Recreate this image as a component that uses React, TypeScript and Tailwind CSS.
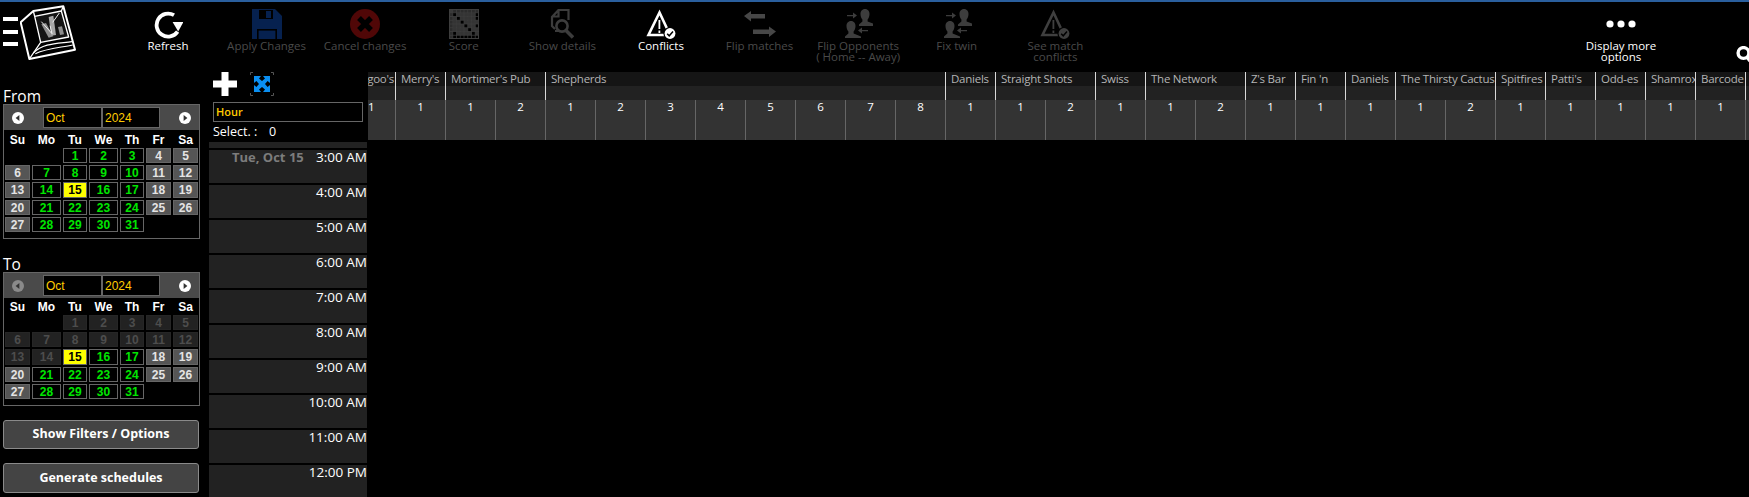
import React from "react";

const on = "text-white";
const off = "text-[#4a4a4a]";

function Refresh() {
  return (
    <svg width="30" height="30" viewBox="0 0 30 30" fill="none">
      <path d="M21 6.2 A11.5 11.5 0 1 0 24.6 22.6" stroke="#fff" strokeWidth="3.8" />
      <path d="M19.6 13 H30.4 L25.2 22.4 Z" fill="#fff" />
    </svg>
  );
}
function Floppy() {
  return (
    <svg width="30" height="30" viewBox="0 0 30 30">
      <path d="M0 0 H23 L30 7 V30 H0 Z" fill="#06214f" />
      <rect x="7" y="1" width="14" height="9" fill="#000" />
      <rect x="14" y="2" width="5" height="7" fill="#06214f" />
      <rect x="5" y="20" width="20" height="1.6" fill="#000" />
      <rect x="5" y="20" width="1.6" height="10" fill="#000" />
      <rect x="23.4" y="20" width="1.6" height="10" fill="#000" />
    </svg>
  );
}
function Cancel() {
  return (
    <svg width="30" height="30" viewBox="0 0 30 30">
      <circle cx="15" cy="15" r="15" fill="#500707" />
      <path d="M9 9 L21 21 M21 9 L9 21" stroke="#000" strokeWidth="5.4" />
    </svg>
  );
}
function Score() {
  const dark = [
    [2, 1], [3, 1], [4, 1], [5, 1], [6, 1], [1, 2], [3, 2], [4, 2], [5, 2], [6, 2], [1, 3], [2, 3], [4, 3], [5, 3], [6, 3], [7, 3],
    [1, 4], [2, 4], [3, 4], [5, 4], [6, 4], [1, 5], [2, 5], [3, 5], [4, 5], [6, 5], [7, 5], [2, 6], [3, 6], [4, 6], [5, 6], [7, 6],
  ];
  const xs = [0, 1, 2, 3, 4, 5, 6, 7, 8];
  return (
    <svg width="30" height="30" viewBox="0 0 32 32">
      <rect x="0.5" y="0.5" width="31" height="31" fill="none" stroke="#3f3f3f" />
      <rect x="0" y="0" width="32" height="4" fill="#3f3f3f" opacity="0.7" />
      <rect x="0" y="0" width="4" height="32" fill="#3f3f3f" opacity="0.7" />
      {dark.map(([x, y]) => (
        <rect key={x + "-" + y} x={x * 4} y={y * 4} width="4" height="4" fill="#343434" />
      ))}
      {xs.map((i) => (
        <path key={i} d={`M${i * 4} 0 V32 M0 ${i * 4} H32`} stroke="#3f3f3f" strokeWidth="0.8" />
      ))}
    </svg>
  );
}
function Details() {
  return (
    <svg width="24" height="30" viewBox="0 0 24 30" fill="none">
      <path d="M8.5 1 H18.5 V11 M5 20 L2 17 V8 L8.5 1 V7.5 H2" stroke="#3c3c3c" strokeWidth="2.2" />
      <circle cx="12" cy="17" r="5.6" stroke="#3c3c3c" strokeWidth="2.6" />
      <path d="M16 21.5 L23 28.5" stroke="#3c3c3c" strokeWidth="3.6" />
      <path d="M5 22 H9" stroke="#3c3c3c" strokeWidth="2" />
    </svg>
  );
}
function Warn({ color }: { color: string }) {
  return (
    <svg width="30" height="30" viewBox="0 0 30 30" fill="none">
      <path d="M13.5 3.5 L2.5 26 H24 Z" stroke={color} strokeWidth="2.6" strokeLinejoin="miter" />
      <path d="M13.4 11 V20 M13.4 21.5 V24" stroke={color} strokeWidth="1.8" />
      <circle cx="24" cy="24.5" r="6.6" fill="#000" />
      <circle cx="24" cy="24.5" r="5.4" fill={color} />
      <path d="M21.2 24.8 L23.2 26.8 L27 22.6" stroke="#000" strokeWidth="1.5" />
    </svg>
  );
}
function FlipMatches() {
  return (
    <svg width="32" height="30" viewBox="0 0 32 30" fill="#474747">
      <path d="M0 7 L7 2 V5 H21 V9.5 H7 V12.5 Z" />
      <path d="M32 22.5 L25 17.5 V20.5 H9 V25 H25 V28 Z" />
    </svg>
  );
}
function Person({ x, y }: { x: number; y: number }) {
  return (
    <path
      transform={`translate(${x} ${y})`}
      d="M5 0 C8 0 9.5 2.4 9.5 5 C9.5 7.6 8.6 9.4 7.6 10.6 V12.4 L15 15.4 V17 H-1 V15.4 L2.4 12.4 V10.6 C1.4 9.4 0.5 7.6 0.5 5 C0.5 2.4 2 0 5 0 Z"
    />
  );
}
function FlipOpp() {
  return (
    <svg width="30" height="30" viewBox="0 0 30 30" fill="#3d3d3d">
      <Person x={17} y={0} />
      <Person x={3} y={12} />
      <path d="M4 6 H10 V3.6 L14 6.6 L10 9.6 V7.2 H4 Z" />
      <path d="M25 21 H19 V18.6 L15 21.6 L19 24.6 V22.2 H25 Z" />
    </svg>
  );
}
function Dots() {
  return (
    <svg width="30" height="30" viewBox="0 0 30 30" fill="#fff">
      <circle cx="4" cy="15" r="3.6" />
      <circle cx="15" cy="15" r="3.6" />
      <circle cx="26" cy="15" r="3.6" />
    </svg>
  );
}

const tools: { label: string[]; active: boolean; icon: React.ReactNode }[] = [
  { label: ["Refresh"], active: true, icon: <Refresh /> },
  { label: ["Apply Changes"], active: false, icon: <Floppy /> },
  { label: ["Cancel changes"], active: false, icon: <Cancel /> },
  { label: ["Score"], active: false, icon: <Score /> },
  { label: ["Show details"], active: false, icon: <Details /> },
  { label: ["Conflicts"], active: true, icon: <Warn color="#ffffff" /> },
  { label: ["Flip matches"], active: false, icon: <FlipMatches /> },
  { label: ["Flip Opponents", "( Home -- Away)"], active: false, icon: <FlipOpp /> },
  { label: ["Fix twin"], active: false, icon: <FlipOpp /> },
  { label: ["See match", "conflicts"], active: false, icon: <Warn color="#3f3f3f" /> },
];

function Tool({ label, active, icon }: { label: string[]; active: boolean; icon: React.ReactNode }) {
  return (
    <div className={`w-[98.6px] shrink-0 flex flex-col items-center ${active ? on : off}`}>
      <div className="h-[30px] flex items-center justify-center">{icon}</div>
      <div className="mt-[1px] text-[11.5px] leading-[11px] text-center whitespace-nowrap">
        {label.map((l) => (
          <div key={l}>{l}</div>
        ))}
      </div>
    </div>
  );
}

function Logo() {
  return (
    <svg width="57" height="58" viewBox="60 14 171 174" fill="none" className="ml-[2px] mt-[-4px]">
      <path d="M62 66 L100 32 L190 18 L225 148 L88 176 Z" stroke="#fff" strokeWidth="6" strokeLinejoin="round" />
      <path d="M104 48 L184 32 L206 110 L122 126 Z" stroke="#fff" strokeWidth="4" strokeLinejoin="round" fill="#141414" />
      <path d="M100 32 L104 48 M190 18 L184 32 M122 126 L88 176" stroke="#fff" strokeWidth="4" />
      <path d="M124 72 L138 68 L160 108 L146 112 Z" fill="#8e8e8e" />
      <path d="M146 50 L160 46 L168 104 L154 106 Z" fill="#a8a8a8" />
      <path d="M174 80 L186 78 L192 102 L180 104 Z" fill="#8e8e8e" />
      <path d="M178 38 L158 66 M124 64 L156 100 L150 76" stroke="#eee" strokeWidth="3" />
      <path d="M100 158 C130 128 170 130 216 124 M106 160 C140 144 180 142 218 134" stroke="#fff" strokeWidth="3.5" />
    </svg>
  );
}

function Arrow({ dir, dim }: { dir: "l" | "r"; dim?: boolean }) {
  return (
    <svg width="12" height="12" viewBox="0 0 12 12">
      <circle cx="6" cy="6" r="6" fill={dim ? "#8a8a8a" : "#fff"} />
      <path d={dir === "l" ? "M7.4 3 V9 L3.6 6 Z" : "M4.6 3 V9 L8.4 6 Z"} fill="#333" />
    </svg>
  );
}

const cols = ["Su", "Mo", "Tu", "We", "Th", "Fr", "Sa"];
const weekendDays = [4, 5, 6, 11, 12, 13, 18, 19, 20, 25, 26, 27];

function Day({ d, start }: { d: number; start: number }) {
  if (d < 1) return <div />;
  let cls = "border border-[#666] bg-black text-[#00e600]";
  if (d === 15) cls = "border border-[#666] bg-[#ffff00] text-black";
  else if (d < start) cls = "border border-[#262626] bg-[#222] text-[#4d4d4d]";
  else if (weekendDays.includes(d)) cls = "border border-[#666] bg-[#555] text-[#e4e4e4]";
  return <div className={`flex items-center justify-center font-bold text-[12px] leading-none ${cls}`}>{d}</div>;
}

function Calendar({ start, dim, tall }: { start: number; dim?: boolean; tall?: boolean }) {
  const days = [-1, -2, 1, 2, 3, 4, 5];
  for (let i = 6; i <= 31; i++) days.push(i);
  return (
    <div className={`w-[197px] border border-[#666] bg-black ml-[3px] font-['Liberation_Sans',sans-serif] ${tall ? "h-[135px]" : "h-[134px]"}`}>
      <div className="h-[25px] bg-[#4a4a4a] flex items-center">
        <div className="w-[39px] flex justify-start pl-[8px]">
          <Arrow dir="l" dim={dim} />
        </div>
        <div className="w-[59px] h-[21px] border border-[#666] bg-black text-[#ffcc00] text-[12px] pl-[2px] flex items-center">Oct</div>
        <div className="w-[58px] h-[21px] border border-[#666] bg-black text-[#ffcc00] text-[12px] pl-[2px] flex items-center">2024</div>
        <div className="flex-1 flex justify-center pl-[11px]">
          <Arrow dir="r" />
        </div>
      </div>
      <div className={`grid grid-cols-[25px_29px_24px_29px_24px_25px_25px] gap-x-[2px] pl-[1px] items-center text-white font-bold text-[12px] text-center ${tall ? "h-[18px] pt-[1px]" : "h-[17px]"}`}>
        {cols.map((c) => (
          <div key={c}>{c}</div>
        ))}
      </div>
      <div className="grid grid-cols-[25px_29px_24px_29px_24px_25px_25px] grid-rows-[15px_15px_16px_15px_15px] gap-[2px] pl-[1px]">
        {days.map((d) => (
          <Day key={d} d={d} start={start} />
        ))}
      </div>
    </div>
  );
}

function Expand() {
  return (
    <svg width="24" height="24" viewBox="0 0 24 24" fill="none">
      <path d="M0.5 3 V0.5 H3 M21 0.5 H23.5 V3 M23.5 21 V23.5 H21 M3 23.5 H0.5 V21" stroke="#555" />
      <path d="M4 4 H11 L9 6.4 L12 9 L15 6.4 L13 4 H20 V11 L17.6 9 L15 12 L17.6 15 L20 13 V20 H13 L15 17.6 L12 15 L9 17.6 L11 20 H4 V13 L6.4 15 L9 12 L6.4 9 L4 11 Z" fill="#0a8ff2" />
    </svg>
  );
}

const hours = ["3:00 AM", "4:00 AM", "5:00 AM", "6:00 AM", "7:00 AM", "8:00 AM", "9:00 AM", "10:00 AM", "11:00 AM", "12:00 PM"];

const groups: { name: string; n: number }[] = [
  { name: "goo's", n: 1 },
  { name: "Merry's", n: 1 },
  { name: "Mortimer's Pub", n: 2 },
  { name: "Shepherds", n: 8 },
  { name: "Daniels", n: 1 },
  { name: "Straight Shots", n: 2 },
  { name: "Swiss", n: 1 },
  { name: "The Network", n: 2 },
  { name: "Z's Bar", n: 1 },
  { name: "Fin 'n", n: 1 },
  { name: "Daniels", n: 1 },
  { name: "The Thirsty Cactus", n: 2 },
  { name: "Spitfires", n: 1 },
  { name: "Patti's", n: 1 },
  { name: "Odd-es", n: 1 },
  { name: "Shamrox", n: 1 },
  { name: "Barcode", n: 1 },
  { name: "", n: 1 },
];

function Group({ name, n, first }: { name: string; n: number; first: boolean }) {
  const subs: number[] = [];
  for (let i = 1; i <= n; i++) subs.push(i);
  return (
    <div className="shrink-0 flex flex-col" style={{ width: n * 50 }}>
      <div className={`h-[14px] bg-[#151515] border-r border-[#d8d8d8] text-[#b4b4b4] text-[11.5px] tracking-[-0.25px] leading-[14px] whitespace-nowrap overflow-hidden ${first ? "text-right pr-[1px]" : "pl-[5px]"}`}>
        {name}
      </div>
      <div className="h-[14px] bg-[#222] border-r border-[#d8d8d8]" />
      <div className="h-[40px] flex">
        {subs.map((s) => (
          <div key={s} className={`w-[50px] bg-[#333] border-r border-[#666] text-white text-[11.5px] leading-[14px] ${first ? "text-left pl-[22px]" : "text-center"}`}>
            {name ? s : null}
          </div>
        ))}
      </div>
    </div>
  );
}

export default function App() {
  return (
    <div className="relative w-[1749px] h-[497px] overflow-hidden bg-black text-white font-['Open_Sans','Noto_Sans',sans-serif]">
      <div className="h-[2px] bg-[#2a5f9e]" />
      <div className="h-[70px] flex pt-[7px]">
        <div className="w-[118.7px] shrink-0 flex items-start">
          <div className="ml-[3px] mt-[8px] w-[15px] flex flex-col gap-[8.5px]">
            <div className="h-[4px] bg-white" />
            <div className="h-[4px] bg-white" />
            <div className="h-[4px] bg-white" />
          </div>
          <Logo />
        </div>
        {tools.map((t) => (
          <Tool key={t.label[0]} label={t.label} active={t.active} icon={t.icon} />
        ))}
        <div className="ml-auto mr-[78.7px]">
          <Tool label={["Display more", "options"]} active={true} icon={<Dots />} />
        </div>
      </div>

      <div className="flex h-[425px]">
        <div className="w-[209px] shrink-0">
          <div className="mt-[16px] h-[16px] pl-[3px] text-[15.5px] leading-[16px]">From</div>
          <Calendar start={1} tall />
          <div className="mt-[17px] h-[16px] pl-[3px] text-[15.5px] leading-[16px]">To</div>
          <Calendar start={15} dim />
          <button className="block ml-[3px] mt-[14px] w-[196px] h-[29px] rounded-[3px] border border-[#8a8a8a] bg-[#444] text-white font-bold text-[12.5px]">
            Show Filters / Options
          </button>
          <button className="block ml-[3px] mt-[14px] w-[196px] h-[30px] rounded-[3px] border border-[#8a8a8a] bg-[#444] text-white font-bold text-[12.5px]">
            Generate schedules
          </button>
        </div>

        <div className="w-[159px] shrink-0">
          <div className="pl-[4px] h-[24px] flex items-start">
            <svg width="24" height="24" viewBox="0 0 24 24" fill="#fff">
              <path d="M8.5 0 H15.5 V8.5 H24 V15.5 H15.5 V24 H8.5 V15.5 H0 V8.5 H8.5 Z" />
            </svg>
            <div className="ml-[13px]">
              <Expand />
            </div>
          </div>
          <div className="ml-[4px] mt-[6px] w-[150px] h-[20px] border border-[#666] bg-black text-[#ffcc00] font-semibold text-[11px] leading-[18px] pl-[2px]">
            Hour
          </div>
          <div className="ml-[4px] h-[20px] flex items-center text-[12.5px] text-white">
            <span className="w-[56px]">Select. :</span>
            <span>0</span>
          </div>
          <div className="h-[6px] w-[158px] bg-[#222]" />
          <div className="mt-[2px] w-[158px] flex flex-col gap-[2px]">
            {hours.map((h, i) => (
              <div key={h} className="h-[33px] shrink-0 bg-[#222] flex items-start text-[13.5px] leading-[15px]">
                {i === 0 ? <span className="ml-[23px] font-bold text-[#7c7c7c] text-[13px]">Tue, Oct 15</span> : null}
                <span className="ml-auto">{h}</span>
              </div>
            ))}
          </div>
        </div>

        <div className="flex-1 overflow-hidden">
          <div className="flex ml-[-22px] w-[1500px]">
            {groups.map((g, i) => (
              <Group key={g.name + i} name={g.name} n={g.n} first={i === 0} />
            ))}
          </div>
        </div>
      </div>

      <svg width="14" height="16" viewBox="0 0 14 16" fill="none" className="absolute left-[1736px] top-[46px]">
        <circle cx="7.5" cy="7" r="5.4" stroke="#fff" strokeWidth="3.4" />
        <path d="M11 11 L14 15" stroke="#fff" strokeWidth="3.4" />
      </svg>
    </div>
  );
}
